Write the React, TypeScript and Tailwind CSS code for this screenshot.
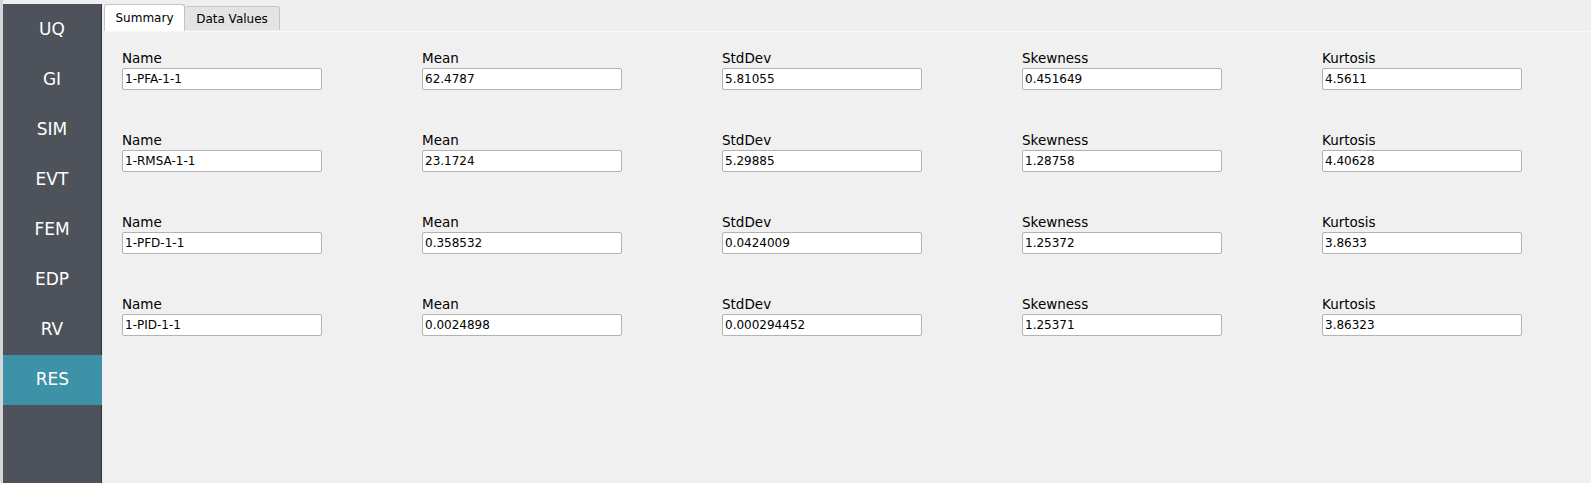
import React from "react";

const NAV = ["UQ", "GI", "SIM", "EVT", "FEM", "EDP", "RV", "RES"];

const ROWS = [
  ["1-PFA-1-1", "62.4787", "5.81055", "0.451649", "4.5611"],
  ["1-RMSA-1-1", "23.1724", "5.29885", "1.28758", "4.40628"],
  ["1-PFD-1-1", "0.358532", "0.0424009", "1.25372", "3.8633"],
  ["1-PID-1-1", "0.0024898", "0.000294452", "1.25371", "3.86323"],
];

const HEADS = ["Name", "Mean", "StdDev", "Skewness", "Kurtosis"];

const font = { fontFamily: "'DejaVu Sans', Verdana, sans-serif" };

export default function App() {
  return (
    <div
      className="flex h-[483px] w-[1591px] overflow-hidden bg-[#efefef] text-black"
      style={font}
    >
      <div className="w-[3px] shrink-0 bg-[#d6d6d6]" />
      <div className="mt-[4px] flex w-[99px] shrink-0 flex-col border-r border-[#2f3136] bg-[#4e525a] pt-[1px]">
        {NAV.map((n) => (
          <div
            key={n}
            className={`flex h-[50px] items-center justify-center text-[17px] text-white ${
              n === "RES" ? "mr-[-1px] bg-[#3d92a8]" : ""
            }`}
          >
            {n}
          </div>
        ))}
      </div>
      <div className="ml-[2px] flex flex-1 flex-col">
        <div className="flex h-[31px] items-end">
          <div className="flex h-[27px] w-[81px] items-center justify-center rounded-t-[3px] border border-b-0 border-[#c4c4c4] bg-white text-[12px]">
            Summary
          </div>
          <div className="mb-[1px] flex h-[24px] w-[95px] items-center justify-center rounded-t-[3px] border border-b-0 border-l-0 border-[#c4c4c4] bg-[#e4e4e4] text-[12px]">
            Data Values
          </div>
        </div>
        <div className="flex-1 border-t border-[#f8f8f8] bg-[#f0f0f0] pl-[18px] pt-[17px]">
          <div className="flex flex-col gap-[41px]">
            {ROWS.map((r, i) => (
              <div key={i} className="grid grid-cols-[300px_300px_300px_300px_300px]">
                {r.map((v, j) => (
                  <div key={j} className="flex flex-col">
                    <span className="h-[19px] text-[13.5px] leading-[19px]">{HEADS[j]}</span>
                    <div className="flex h-[22px] w-[200px] items-center rounded-[2px] border border-[#b3b3b3] bg-white pl-[2px] text-[12px]">
                      {v}
                    </div>
                  </div>
                ))}
              </div>
            ))}
          </div>
        </div>
      </div>
    </div>
  );
}
